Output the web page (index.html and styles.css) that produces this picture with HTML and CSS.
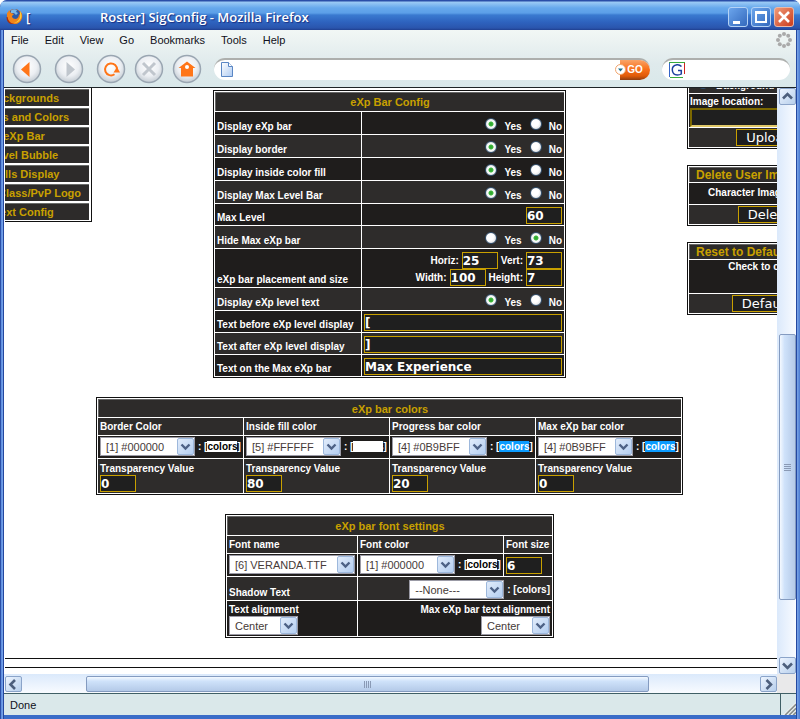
FILE: index.html
```
<!DOCTYPE html>
<html lang="en">
<head>
<meta charset="utf-8">
<title>Roster] SigConfig - Mozilla Firefox</title>
<link rel="stylesheet" href="styles.css">
</head>
<body>
<svg class="defs" aria-hidden="true">
  <defs>
    <radialGradient id="orb" cx="50%" cy="40%" r="60%"><stop offset="0" stop-color="#fff"/><stop offset=".6" stop-color="#eceff3"/><stop offset="1" stop-color="#c3cbd2"/></radialGradient>
    <linearGradient id="drop" x1="0" y1="0" x2="1" y2="1"><stop offset="0" stop-color="#e3edfb"/><stop offset="1" stop-color="#b3cdf0"/></linearGradient>
    <linearGradient id="sheet" x1="0" y1="0" x2="1" y2="1"><stop offset="0" stop-color="#fff"/><stop offset="1" stop-color="#aecbf2"/></linearGradient>
    <symbol id="arrow" viewBox="0 0 17 17"><rect x=".5" y=".5" width="16" height="16" rx="1.500" fill="url(#drop)" stroke="#9db8dc"/><path d="M4.500 6.500l4 4 4-4" fill="none" stroke="#4d6185" stroke-width="2.400"/></symbol>
  </defs>
</svg>
<div class="window">
  <header class="titlebar">
    <svg class="fox" viewBox="0 0 17 17" aria-hidden="true">
      <circle cx="8.500" cy="8.500" r="7.500" fill="#e66a12"/>
      <circle cx="8.500" cy="6.500" r="5.500" fill="#2c5aa8"/>
      <path d="M5 2.500q3-2 6-.5l-1 2 2 1-2 2-2-2-3 0z" fill="#79b6e6"/>
      <path d="M1 4l1 1 1-3 2 3 3 1-2 2q0 3 4 3 3-1 3-5l2 2q0-3-1-5 3 3 2 7-2 6-8 6-7-1-7-8z" fill="#f2851a"/>
      <path d="M14 3q3 5 0 9-2 3-6 3 5-2 6-6z" fill="#f9cf3d"/>
      <path d="M1.500 9q1 6 7 7-8 1-8-7z" fill="#a92d0c"/>
    </svg>
    <h1 class="title"><span class="title-open">[</span><span>Roster] SigConfig - Mozilla Firefox</span></h1>
    <div class="caption-buttons">
      <button class="cap" aria-label="Minimize"><svg viewBox="0 0 20 20"><path d="M5 14h7v3H5z" fill="#fff"/></svg></button>
      <button class="cap" aria-label="Maximize"><svg viewBox="0 0 20 20"><path d="M4 4h12v12H4zM6 7v7h8V7z" fill="#fff" fill-rule="evenodd"/></svg></button>
      <button class="cap cap-close" aria-label="Close"><svg viewBox="0 0 20 20"><path d="M5 5l10 10M15 5L5 15" stroke="#fff" stroke-width="2.600"/></svg></button>
    </div>
  </header>
  <div class="chrome">
    <nav class="menubar">
      <a href="#">File</a><a href="#">Edit</a><a href="#">View</a><a href="#">Go</a><a href="#">Bookmarks</a><a href="#">Tools</a><a href="#">Help</a>
      <svg class="throbber" viewBox="0 0 16 16" aria-hidden="true"><g fill="#aaa"><circle cx="8" cy="2" r="2"/><circle cx="12.200" cy="3.800" r="2"/><circle cx="14" cy="8" r="2"/><circle cx="12.200" cy="12.200" r="2"/><circle cx="8" cy="14" r="2"/><circle cx="3.800" cy="12.200" r="2"/><circle cx="2" cy="8" r="2"/><circle cx="3.800" cy="3.800" r="2"/></g></svg>
    </nav>
    <div class="toolbar">
      <div class="nav-buttons">
        <button class="orb wide" aria-label="Back"><svg viewBox="0 0 30 30"><circle cx="15" cy="15" r="13.500" fill="url(#orb)" stroke="#9aa6b2" stroke-width="1.500"/><path d="M17.500 8v15L9 15.500z" fill="#ff7518"/></svg></button>
        <button class="orb wide" aria-label="Forward"><svg viewBox="0 0 30 30"><circle cx="15" cy="15" r="13.500" fill="url(#orb)" stroke="#9aa6b2" stroke-width="1.500"/><path d="M12.500 8v15l8.500-7.500z" fill="#c0c6cd"/></svg></button>
        <button class="orb" aria-label="Reload"><svg viewBox="0 0 30 30"><circle cx="15" cy="15" r="13.500" fill="url(#orb)" stroke="#9aa6b2" stroke-width="1.500"/><path d="M18.500 20.300a6 6 0 1 1 2.500-4.300" fill="none" stroke="#ff7518" stroke-width="2"/><path d="M17.500 18.500l3.500-5.500 3 5.500z" fill="#ff7518"/></svg></button>
        <button class="orb" aria-label="Stop"><svg viewBox="0 0 30 30"><circle cx="15" cy="15" r="13.500" fill="url(#orb)" stroke="#9aa6b2" stroke-width="1.500"/><path d="M9 9l12 12M21 9L9 21" stroke="#c0c6cd" stroke-width="3"/></svg></button>
        <button class="orb" aria-label="Home"><svg viewBox="0 0 30 30"><circle cx="15" cy="15" r="13.500" fill="url(#orb)" stroke="#9aa6b2" stroke-width="1.500"/><path d="M15 7.500l8.500 6.500H21v8.500H9V14H6.500z" fill="#ff7518"/><circle cx="15" cy="13" r="2" fill="#fff"/></svg></button>
      </div>
      <div class="pill address">
        <svg class="page-icon" viewBox="0 0 12 15" aria-hidden="true"><path d="M.5.5h7l4 4v10H.5z" fill="url(#sheet)" stroke="#5a86c4"/><path d="M7.500.5v4h4" fill="#fff" stroke="#5a86c4"/></svg>
        <input class="bare" type="text" aria-label="Address">
        <button class="go"><svg class="go-drop" viewBox="0 0 11 11" aria-hidden="true"><circle cx="5.500" cy="5.500" r="5" fill="#fff" stroke="#f0a46c"/><path d="M3 4.500h5l-2.500 3z" fill="#1c6f8a"/></svg>GO</button>
      </div>
      <div class="pill search">
        <svg class="g-icon" viewBox="0 0 16 16" aria-hidden="true"><path d="M.5 15V.5" stroke="#3465c8"/><path d="M0 .5h16" stroke="#39ab3c"/><path d="M15.500 1v11" stroke="#cf2420"/><path d="M1 15.500h13" stroke="#39ab3c"/><path d="M12.500 4.500Q10.500 2.500 8 2.800 3 3.500 3.300 8q.4 5 5 5 2.500 0 4-1V8.500H9" fill="none" stroke="#1c3f9f" stroke-width="1.500"/></svg>
        <input class="bare" type="text" aria-label="Search">
      </div>
    </div>
  </div>

  <div class="browser">
    <main class="page">
      <div class="columns">
        <nav class="side-left">
          <div class="menu-box">
            <a href="#">Backgrounds</a><a href="#">Fonts and Colors</a><a href="#">eXp Bar</a><a href="#">Level Bubble</a><a href="#">Skills Display</a><a href="#">Level/Class/PvP Logo</a><a href="#">Text Config</a>
          </div>
        </nav>

        <form class="center">
          <table class="panel config">
            <colgroup><col class="col-label"><col class="col-value"></colgroup>
            <tr class="head tall"><th colspan="2">eXp Bar Config</th></tr>
            <tr class="r-radio"><td>Display eXp bar</td><td class="right"><div class="radios"><label><input type="radio" name="a" checked>Yes</label><label><input type="radio" name="a">No</label></div></td></tr>
            <tr class="r-radio lite"><td>Display border</td><td class="right"><div class="radios"><label><input type="radio" name="b" checked>Yes</label><label><input type="radio" name="b">No</label></div></td></tr>
            <tr class="r-radio"><td>Display inside color fill</td><td class="right"><div class="radios"><label><input type="radio" name="c" checked>Yes</label><label><input type="radio" name="c">No</label></div></td></tr>
            <tr class="r-radio lite"><td>Display Max Level Bar</td><td class="right"><div class="radios"><label><input type="radio" name="d" checked>Yes</label><label><input type="radio" name="d">No</label></div></td></tr>
            <tr class="r-text"><td><label for="maxlevel">Max Level</label></td><td class="right"><div class="fields"><input class="box" id="maxlevel" type="text" value="60"></div></td></tr>
            <tr class="r-radio lite"><td>Hide Max eXp bar</td><td class="right"><div class="radios"><label><input type="radio" name="e">Yes</label><label><input type="radio" name="e" checked>No</label></div></td></tr>
            <tr class="r-double"><td>eXp bar placement and size</td><td class="right">
              <div class="fields"><label for="hz">Horiz:</label><input class="box" id="hz" type="text" value="25"><label for="vt">Vert:</label><input class="box" id="vt" type="text" value="73"></div>
              <div class="fields"><label for="wd">Width:</label><input class="box" id="wd" type="text" value="100"><label for="ht">Height:</label><input class="box" id="ht" type="text" value="7"></div></td></tr>
            <tr class="r-radio lite"><td>Display eXp level text</td><td class="right"><div class="radios"><label><input type="radio" name="f" checked>Yes</label><label><input type="radio" name="f">No</label></div></td></tr>
            <tr class="r-text"><td><label for="before">Text before eXp level display</label></td><td><div class="fields"><input class="box full" id="before" type="text" value="["></div></td></tr>
            <tr class="r-text lite"><td><label for="after">Text after eXp level display</label></td><td><div class="fields"><input class="box full" id="after" type="text" value="]"></div></td></tr>
            <tr class="r-text"><td><label for="onmax">Text on the Max eXp bar</label></td><td><div class="fields"><input class="box full" id="onmax" type="text" value="Max Experience"></div></td></tr>
          </table>

          <table class="panel colors">
            <tr class="head"><th colspan="4">eXp bar colors</th></tr>
            <tr class="r-name lite"><td><label for="c1">Border Color</label></td><td><label for="c2">Inside fill color</label></td><td><label for="c3">Progress bar color</label></td><td><label for="c4">Max eXp bar color</label></td></tr>
            <tr class="r-select">
              <td><div class="pick"><span class="select"><select id="c1"><option>[1] #000000</option></select><svg><use href="#arrow"/></svg></span><span>: [<span class="sw sw-black">colors</span>]</span></div></td>
              <td><div class="pick"><span class="select"><select id="c2"><option>[5] #FFFFFF</option></select><svg><use href="#arrow"/></svg></span><span>: [<span class="sw sw-white">colors</span>]</span></div></td>
              <td><div class="pick"><span class="select"><select id="c3"><option>[4] #0B9BFF</option></select><svg><use href="#arrow"/></svg></span><span>: [<span class="sw sw-blue">colors</span>]</span></div></td>
              <td><div class="pick"><span class="select"><select id="c4"><option>[4] #0B9BFF</option></select><svg><use href="#arrow"/></svg></span><span>: [<span class="sw sw-blue">colors</span>]</span></div></td>
            </tr>
            <tr class="r-trans lite">
              <td><label class="stack">Transparency Value<input class="box" type="text" value="0"></label></td>
              <td><label class="stack">Transparency Value<input class="box" type="text" value="80"></label></td>
              <td><label class="stack">Transparency Value<input class="box" type="text" value="20"></label></td>
              <td><label class="stack">Transparency Value<input class="box" type="text" value="0"></label></td>
            </tr>
          </table>

          <table class="panel fonts">
            <colgroup><col class="col-font"><col class="col-color"><col class="col-size"></colgroup>
            <tr class="head tall"><th colspan="3">eXp bar font settings</th></tr>
            <tr class="r-name lite"><td><label for="fn">Font name</label></td><td><label for="fc">Font color</label></td><td><label for="fs">Font size</label></td></tr>
            <tr class="r-select">
              <td><div class="pick"><span class="select wide"><select id="fn"><option>[6] VERANDA.TTF</option></select><svg><use href="#arrow"/></svg></span></div></td>
              <td><div class="pick"><span class="select"><select id="fc"><option>[1] #000000</option></select><svg><use href="#arrow"/></svg></span><span>: [<span class="sw sw-black">colors</span>]</span></div></td>
              <td><div class="fields"><input class="box" id="fs" type="text" value="6"></div></td>
            </tr>
            <tr class="r-shadow lite"><td><label for="sh">Shadow Text</label></td><td colspan="2"><div class="pick end"><span class="select"><select id="sh"><option>--None---</option></select><svg><use href="#arrow"/></svg></span><span>: [colors]</span></div></td></tr>
            <tr class="r-align">
              <td><label class="stack">Text alignment<span class="select small"><select><option>Center</option></select><svg><use href="#arrow"/></svg></span></label></td>
              <td colspan="2"><label class="stack end">Max eXp bar text alignment<span class="select small"><select><option>Center</option></select><svg><use href="#arrow"/></svg></span></label></td>
            </tr>
          </table>
        </form>

        <aside class="side-right">
          <table class="panel side upload">
            <tr class="r-bg lite"><td><div class="radios"><label><input type="radio" name="img" checked>Background</label></div></td></tr>
            <tr class="r-file"><td><label class="file">Image location:<input type="text"></label></td></tr>
            <tr class="r-button lite"><td><button type="button" class="gold">Upload</button></td></tr>
          </table>
          <table class="panel side">
            <tr class="head"><th>Delete User Image</th></tr>
            <tr class="r-char"><td>Character Image:</td></tr>
            <tr class="r-button lite"><td><button type="button" class="gold">Delete</button></td></tr>
          </table>
          <table class="panel side">
            <tr class="head"><th>Reset to Defaults</th></tr>
            <tr class="r-check"><td>Check to confirm</td></tr>
            <tr class="r-button lite"><td><button type="button" class="gold">Defaults</button></td></tr>
          </table>
        </aside>
      </div>
      <div class="footer-strip"></div>
    </main>

    <div class="vbar">
      <button class="sb" aria-label="Scroll up"><svg viewBox="0 0 17 17"><path d="M4 10.500L8.500 6l4.500 4.500" fill="none" stroke="#4d5f7c" stroke-width="2.600"/></svg></button>
      <div class="gap-a"></div>
      <div class="thumb vthumb"><i></i><i></i><i></i><i></i></div>
      <div class="gap-b"></div>
      <button class="sb" aria-label="Scroll down"><svg viewBox="0 0 17 17"><path d="M4 6.500l4.500 4.500L13 6.500" fill="none" stroke="#4d5f7c" stroke-width="2.600"/></svg></button>
    </div>
    <div class="hbar">
      <button class="sb" aria-label="Scroll left"><svg viewBox="0 0 17 17"><path d="M10 4L5.500 8.500 10 13" fill="none" stroke="#4d5f7c" stroke-width="2.600"/></svg></button>
      <div class="gap-c"></div>
      <div class="thumb hthumb"><i></i><i></i><i></i><i></i></div>
      <div class="gap-d"></div>
      <button class="sb" aria-label="Scroll right"><svg viewBox="0 0 17 17"><path d="M6.500 4L11 8.500 6.500 13" fill="none" stroke="#4d5f7c" stroke-width="2.600"/></svg></button>
    </div>
    <div class="corner"></div>
  </div>

  <footer class="status">
    <span class="done">Done</span>
    <svg class="grip" viewBox="0 0 15 20" aria-hidden="true"><path d="M4 20L15 9M8 20l7-7M12 20l3-3" stroke="#8a8f8c" stroke-width="2"/><path d="M2.500 20L15 7.500M6.500 20l8.500-8.500M10.500 20l4.500-4.500" stroke="#fff"/></svg>
  </footer>
</div>
</body>
</html>
```
FILE: styles.css
```
* { box-sizing: border-box; }
body { margin: 0; background: #fff; font: bold 10px/12px "Liberation Sans", Arial, sans-serif; }
button, input, select { font: inherit; margin: 0; padding: 0; border: 0; border-radius: 0; outline: 0; }
a { text-decoration: none; color: inherit; }
.defs { position: absolute; width: 0; height: 0; }

.window {
  height: 100vh;
  display: flex;
  flex-direction: column;
  padding: 0 4px 4px;
  background: linear-gradient(90deg, #2c50a8 0, #2c50a8 1px, #5a8ade 1px, #7aa5e8 3px, #2448a0 3px, #2448a0 4px, #3a6cc8 4px, #3a6cc8 calc(100% - 4px), #2448a0 calc(100% - 4px), #2448a0 calc(100% - 3px), #7aa5e8 calc(100% - 3px), #4a7ad0 100%);
  border-radius: 7px 7px 0 0;
  overflow: hidden;
}
.titlebar {
  display: flex;
  align-items: center;
  height: 30px;
  flex: none;
  margin: 0 -4px;
  padding: 3px 6px 0;
  background: linear-gradient(#2a4ea8 0, #2a4ea8 1px, #9ccbf5 2px, #66a8ec 8px, #5c9fe8 13px, #3a7ad0 15px, #2e63bf 22px, #2a55ad 28px, #1f3f90 30px);
  border-radius: 7px 7px 0 0;
}
.fox { width: 17px; height: 17px; flex: none; }
.title { display: flex; flex: 1; margin: 0 0 0 3px; font: 600 13px/20px "Open Sans", "Noto Sans", sans-serif; color: #fff; text-shadow: 1px 1px 1px #1a2f80; white-space: nowrap; }
.title-open { width: 74px; }
.caption-buttons { display: flex; gap: 3px; }
.cap { width: 20px; height: 20px; border: 1px solid #b4d2f5; border-radius: 3px; background: linear-gradient(135deg, #6ba5ec, #3469bd); }
.cap svg { display: block; width: 20px; height: 20px; margin: -1px; }
.cap-close { border-color: #eab9a8; background: linear-gradient(135deg, #f09a78, #cb3c1c); }

.chrome { flex: none; background: linear-gradient(#f2f7f5, #dfeaec 60%, #d9e8ea); border-bottom: 1px solid #1d2326; }
.menubar { display: flex; align-items: center; gap: 16px; height: 20px; padding: 0 4px 0 7px; font-weight: normal; font-size: 11px; color: #101020; }
.throbber { width: 16px; height: 16px; margin-left: auto; }
.toolbar { display: flex; align-items: center; gap: 12px; height: 37px; padding: 0 6px 0 8px; }
.nav-buttons { display: flex; gap: 8px; }
.orb { width: 30px; height: 30px; background: none; }
.orb svg { display: block; width: 30px; height: 30px; }
.orb.wide { margin-right: 4px; }
.pill { display: flex; align-items: center; height: 22px; background: #fff; border-radius: 11px; border-top: 2px solid #adafad; }
.address { flex: 1; padding-left: 7px; }
.search { width: 128px; padding-left: 7px; }
.page-icon { width: 12px; height: 15px; }
.g-icon { width: 16px; height: 16px; }
.bare { flex: 1; min-width: 0; background: none; }
.go { display: flex; align-items: center; justify-content: center; height: 20px; width: 30px; border-radius: 0 10px 10px 0; background: linear-gradient(#f9a468, #f9711c 45%, #e05a08 80%, #8e3c10); color: #fff; }
.go-drop { width: 11px; height: 11px; margin-left: -12px; margin-right: 1px; flex: none; }

.browser { flex: 1; min-height: 0; display: grid; grid-template-columns: minmax(0, 1fr) 19px; grid-template-rows: minmax(0, 1fr) 19px; background: #fff; }
.page { overflow: hidden; padding-left: 1px; }
.columns { display: grid; grid-template-columns: 87px minmax(0, 1fr) 90px; }

.side-left { display: flex; justify-content: flex-end; overflow: hidden; }
.menu-box { flex: none; width: 136px; display: grid; gap: 2px; align-self: start; padding: 1px 2px; border: solid #111; border-width: 0 1px 1px; color: #c8a000; font-size: 11px; line-height: 16px; text-align: center; }
.menu-box a { border-top: 1px solid #6a6c6a; background: #2d2b2a; height: 17px; white-space: nowrap; }

.center { display: flex; flex-direction: column; align-items: center; gap: 19px; padding-top: 2px; }
.panel { border: 1px solid #111; border-collapse: separate; border-spacing: 1px; background: #fff; color: #fff; table-layout: fixed; }
.panel td { background: #1f1d1c; padding: 0 2px 1px; vertical-align: bottom; white-space: nowrap; }
.panel .lite td { background: #2e2c2b; }
.panel th { background: #2d2b2a; border: solid #666; border-width: 1px 0 0 1px; padding: 0; color: #c8a000; font-size: 11px; line-height: 14px; white-space: nowrap; }
.head { height: 18px; }
.head.tall { height: 19px; }
.config { width: 353px; }
.col-label { width: 146px; }
.col-value { width: 202px; }
.colors { width: 587px; }
.fonts { width: 329px; }
.col-font { width: 130px; }
.col-color { width: 145px; }
.col-size { width: 48px; }
.r-radio { height: 22px; }
.r-text { height: 21px; }
.r-double { height: 38px; }
.r-name { height: 17px; }
.r-name td, .r-select td { padding-bottom: 2px; }
.r-select { height: 22px; }
.r-shadow { height: 23px; }
.r-trans { height: 34px; }
.r-align { height: 35px; }

.radios { display: flex; justify-content: flex-end; gap: 8px; }
.radios label { display: flex; align-items: baseline; gap: 7px; }
.radios input { appearance: none; width: 12px; height: 12px; border-radius: 50%; border: 1px solid #33506e; background: radial-gradient(circle at 40% 40%, #fff 40%, #c9cdd2); }
.radios input:checked { background: radial-gradient(circle, #28a528 0, #3fb53f 2px, #fff 3px, #e4e8ea 5px); }

.fields { display: flex; align-items: center; gap: 3px; }
.right .fields { justify-content: flex-end; }
.box { display: block; width: 36px; height: 17px; border: 1px solid #c8a000; background: #1f1f1f; color: #fff; font: bold 12px/15px "DejaVu Sans", Verdana, sans-serif; }
.box.full { width: 100%; }
.stack { display: flex; flex-direction: column; align-items: flex-start; }
.stack.end { align-items: flex-end; }

.pick { display: flex; align-items: center; gap: 3px; }
.pick.end { justify-content: flex-end; }
.select { display: grid; width: 95px; height: 19px; }
.select.wide { width: 126px; }
.select.small { width: 69px; }
.select select { grid-area: 1 / 1; appearance: none; width: 100%; height: 100%; padding: 0 18px 0 5px; border: 1px solid #9b9ba6; background: #fff; color: #463a38; font-weight: normal; font-size: 11px; }
.select svg { grid-area: 1 / 1; justify-self: end; align-self: center; width: 17px; height: 17px; margin-right: 1px; pointer-events: none; }
.sw-black { background: #fff; color: #000; }
.sw-white { background: #fff; color: #fff; }
.sw-blue { background: #0b9bff; }

.side-right { display: flex; flex-direction: column; gap: 16px; overflow: hidden; }
.side { width: 164px; flex: none; }
.upload { margin-top: -19px; }
.side .head { height: 15px; }
.side th { text-align: left; padding-left: 6px; font-size: 12px; }
.r-bg { height: 22px; }
.r-bg .radios { justify-content: flex-start; padding-left: 6px; }
.r-file { height: 33px; }
.r-file td { padding: 0 1px; }
.file { display: flex; flex-direction: column; }
.file input { width: 100%; height: 19px; border: 2px solid; border-color: #7c6800 #e0c868 #e0c868 #7c6800; background: #1f1f1f; }
.r-button { height: 19px; }
.r-button td { text-align: center; padding: 1px 0; }
.gold { display: inline-block; height: 17px; padding: 0 9px; border: 1px solid #c8a000; background: #1f1f1f; color: #fff; font: 13px/15px "DejaVu Sans", Verdana, sans-serif; vertical-align: top; }
.r-char { height: 21px; }
.r-char td { vertical-align: middle; padding-left: 19px; }
.r-check { height: 33px; }
.r-check td { vertical-align: top; text-align: center; padding-top: 1px; }

.footer-strip { height: 10px; margin-top: 20px; border: solid #111; border-width: 1px 0; }

.vbar { display: flex; flex-direction: column; padding: 0 0 0 2px; background: linear-gradient(90deg, #dbe9fb, #f8fbff); }
.hbar { display: flex; padding: 2px 0 1px 1px; background: linear-gradient(#dbe9fb, #f8fbff); }
.sb { flex: none; width: 17px; height: 17px; border: 1px solid #8ba4c9; border-radius: 2px; background: linear-gradient(135deg, #eef5ff, #b7cfec); }
.hbar .sb { height: 16px; }
.sb svg { display: block; width: 17px; height: 17px; margin: -1px; }
.gap-a { flex: 230; }
.vthumb { flex: 265; flex-direction: column; background: linear-gradient(90deg, #f4f9ff, #cfe2fa 30%, #b4cae8); }
.gap-b { flex: 57; }
.gap-c { flex: 64; }
.hthumb { flex: 563; background: linear-gradient(#f4f9ff, #cfe2fa 30%, #b4cae8); }
.gap-d { flex: 111; }
.thumb { display: flex; align-items: center; justify-content: center; gap: 1px; border: 1px solid #849bc0; border-radius: 2px; }
.thumb i { background: #8a9ab5; }
.vthumb i { width: 7px; height: 1px; }
.hthumb i { width: 1px; height: 7px; }
.corner { background: #e9e9ea; }

.status { flex: none; display: flex; height: 22px; background: #dae8ea; border-top: 1px solid #3f5f66; font-weight: normal; font-size: 11px; color: #101020; }
.done { flex: 1; padding: 5px 0 0 6px; border-right: 1px solid #3f5f66; }
.grip { width: 15px; height: 20px; align-self: flex-end; }
```
